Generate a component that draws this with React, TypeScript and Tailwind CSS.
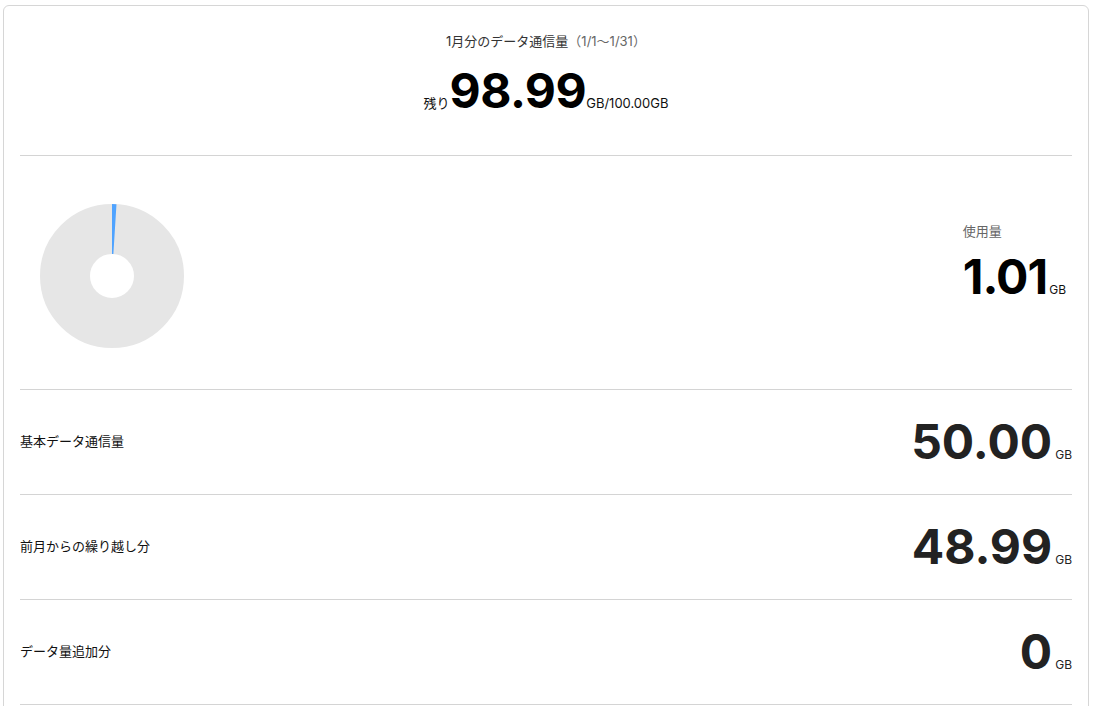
const jp = "font-['Inter','Noto_Sans_CJK_JP',sans-serif]";

function Donut({ percent }: { percent: number }) {
  const r = 47;
  const c = 2 * Math.PI * r;
  return (
    <svg width="146" height="146" viewBox="0 0 146 146">
      <circle cx="73" cy="73" r={r} fill="none" stroke="#e6e6e6" strokeWidth="50" />
      <circle
        cx="73"
        cy="73"
        r={r}
        fill="none"
        stroke="#4fa3ff"
        strokeWidth="50"
        strokeDasharray={`${(c * percent) / 100} ${c}`}
        transform="rotate(-90 73 73)"
      />
    </svg>
  );
}

const rows = [
  { label: "基本データ通信量", value: "50.00" },
  { label: "前月からの繰り越し分", value: "48.99" },
  { label: "データ量追加分", value: "0" }
];

export default function App() {
  return (
    <div className={`min-h-screen bg-white pt-[5px] pl-[3px] pr-[9px] ${jp}`}>
      <div className="rounded-md border border-[#d6d6d6] px-4 pb-8">
        <section className="flex flex-col items-center border-b border-[#d4d4d4] pt-[26px] pb-[33px]">
          <p className="text-[13px] text-[#333]">
            1月分のデータ通信量<span className="text-[#666]">（1/1〜1/31）</span>
          </p>
          <div className="mt-[8px] flex items-baseline">
            <span className="text-[13px] text-[#111]">残り</span>
            <span className="text-[48px] font-bold leading-[62px] tracking-[-0.5px] text-black">98.99</span>
            <span className="text-[13px] text-[#111]">GB/100.00GB</span>
          </div>
        </section>

        <section className="flex items-center justify-between border-b border-[#d4d4d4] pt-[47px] pb-[40px]">
          <div className="pl-[19px]">
            <Donut percent={1.01} />
          </div>
          <div className="pr-[6px] pb-[22px]">
            <p className="text-[13px] text-[#666]">使用量</p>
            <div className="mt-[6px] flex items-baseline">
              <span className="text-[48px] font-bold leading-[60px] tracking-[-1px] text-black">1.01</span>
              <span className="ml-[2px] text-[12px] text-[#111]">GB</span>
            </div>
          </div>
        </section>

        {rows.map((row) => (
          <div
            key={row.label}
            className="flex h-[105px] items-center justify-between border-b border-[#d4d4d4]"
          >
            <span className="text-[13px] text-[#111]">{row.label}</span>
            <div className="flex items-baseline">
              <span className="text-[48px] font-bold leading-[62px] text-[#222]">{row.value}</span>
              <span className="ml-[3px] text-[12px] text-[#222]">GB</span>
            </div>
          </div>
        ))}
      </div>
    </div>
  );
}
